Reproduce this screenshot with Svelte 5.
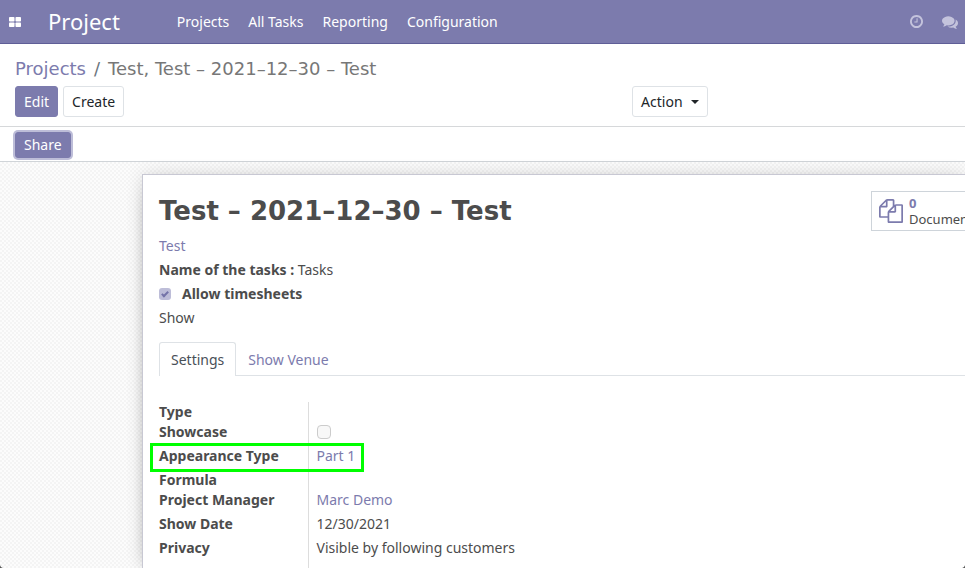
<script>
  const menu = ['Projects', 'All Tasks', 'Reporting', 'Configuration'];
  const fields = [
    { label: 'Type', compact: true },
    { label: 'Showcase', kind: 'check' },
    { label: 'Appearance Type', kind: 'link', value: 'Part 1', highlight: true },
    { label: 'Formula', compact: true },
    { label: 'Project Manager', kind: 'link', value: 'Marc Demo' },
    { label: 'Show Date', value: '12/30/2021' },
    { label: 'Privacy', value: 'Visible by following customers' }
  ];
</script>

<div class="app">
  <header class="navbar">
    <button class="icon apps" aria-label="Applications">
      <svg viewBox="0 0 12 10" width="12" height="10">
        <rect width="5.5" height="4.5" rx="0.8" /><rect x="6.5" width="5.5" height="4.5" rx="0.8" />
        <rect y="5.5" width="5.5" height="4.5" rx="0.8" /><rect x="6.5" y="5.5" width="5.5" height="4.5" rx="0.8" />
      </svg>
    </button>
    <a class="brand" href="#project">Project</a>
    <nav>
      {#each menu as item}
        <a href="#menu">{item}</a>
      {/each}
    </nav>
    <div class="systray">
      <button class="icon" aria-label="Activities">
        <svg viewBox="0 128 1536 1536" width="13" height="13"><path d="M896 544v448q0 14-9 23t-23 9h-320q-14 0-23-9t-9-23v-64q0-14 9-23t23-9h224v-352q0-14 9-23t23-9h64q14 0 23 9t9 23zm416 352q0-148-73-273t-198-198-273-73-273 73-198 198-73 273 73 273 198 198 273 73 273-73 198-198 73-273zm224 0q0 209-103 385.5t-279.5 279.5-385.5 103-385.5-103-279.5-279.5-103-385.5 103-385.5 279.5-279.5 385.5-103 385.5 103 279.5 279.5 103 385.5z" /></svg>
      </button>
      <button class="icon" aria-label="Conversations">
        <svg viewBox="0 0 1792 1792" width="16" height="16"><path d="M1408 768q0 139-94 257t-256.5 186.5-353.5 68.5q-86 0-176-16-124 88-278 128-36 9-86 16h-3q-11 0-20.500-8t-11.500-21q-1-3-1-6.500t.5-6.500 2-6l2.500-5 3.500-5.500 4-5 4.500-5 4-4.500q5-6 23-25t26-29.500 22.500-29 25-38.500 20.500-44q-124-72-195-177t-71-224q0-139 94-257t256.500-186.500 353.500-68.500 353.500 68.500 256.500 186.500 94 257zm384 256q0 120-71 224.500t-195 176.500q10 24 20.500 44t25 38.500 22.500 29 26 29.500 23 25q1 1 4 4.500t4.500 5 4 5 3.500 5.500l2.500 5 2 6 .5 6.500-1 6.500q-3 14-13 22t-22 7q-50-7-86-16-154-40-278-128-90 16-176 16-271 0-472-132 58 4 88 4 161 0 309-45t264-129q125-92 192-212t67-254q0-77-23-152 129 71 204 178t75 230z" /></svg>
      </button>
    </div>
  </header>

  <section class="control-panel">
    <div class="breadcrumb">
      <a href="#projects">Projects</a><span class="slash">/</span><span>Test, Test – 2021–12–30 – Test</span>
    </div>
    <div class="actions">
      <div class="left">
        <button class="btn primary">Edit</button>
        <button class="btn">Create</button>
      </div>
      <button class="btn">Action <span class="caret"></span></button>
    </div>
  </section>

  <div class="statusbar">
    <button class="btn primary share">Share</button>
  </div>

  <main>
    <article class="sheet">
      <div class="heading">
        <h1>Test – 2021–12–30 – Test</h1>
        <button class="stat">
          <svg viewBox="0 0 1792 1792" width="24" height="24"><path d="M1696 384q40 0 68 28t28 68v1216q0 40-28 68t-68 28h-960q-40 0-68-28t-28-68v-288h-544q-40 0-68-28t-28-68v-672q0-40 20-88t48-76l408-408q28-28 76-48t88-20h416q40 0 68 28t28 68v328q68-40 128-40h416zm-544 213l-299 299h299v-299zm-640-384l-299 299h299v-299zm196 647l316-316v-416h-384v416q0 40-28 68t-68 28h-416v640h512v-256q0-40 20-88t48-76zm956 804v-1152h-384v416q0 40-28 68t-68 28h-416v640h896z" /></svg>
          <span class="stat-text"><b>0</b><span>Documents</span></span>
        </button>
      </div>
      <div class="info">
        <div><a href="#test">Test</a></div>
        <div><b>Name of the tasks :</b> Tasks</div>
        <div class="check-row">
          <input id="timesheets" type="checkbox" checked disabled />
          <label for="timesheets">Allow timesheets</label>
        </div>
        <div>Show</div>
      </div>
      <div class="tabs" role="tablist">
        <button role="tab" class="active" aria-selected="true">Settings</button>
        <button role="tab" aria-selected="false">Show Venue</button>
      </div>
      <table>
        <tbody>
          {#each fields as f}
            <tr class:compact={f.compact} class:highlight={f.highlight}>
              <th scope="row">
                {#if f.kind === 'check'}<label for="showcase">{f.label}</label>{:else}{f.label}{/if}
              </th>
              <td>
                {#if f.kind === 'check'}
                  <input id="showcase" type="checkbox" disabled />
                {:else if f.kind === 'link'}
                  <a href="#record">{f.value}</a>
                {:else}
                  {f.value ?? ''}
                {/if}
              </td>
            </tr>
          {/each}
        </tbody>
      </table>
    </article>
  </main>
</div>

<style>
  :global(body) { margin: 0; }
  .app {
    display: flex;
    flex-direction: column;
    height: 100vh;
    overflow: hidden;
    font: 14px/20px "Lucida Grande", "Noto Sans", sans-serif;
    color: #4c4c4c;
    background: #fff;
  }
  .app * { box-sizing: border-box; }
  .app::before, .app::after {
    content: "";
    position: fixed;
    z-index: 5;
    bottom: 0;
    width: 5px;
    height: 5px;
  }
  .app::before { left: 0; background: radial-gradient(circle at 100% 0, transparent 5px, #555 6px); }
  .app::after { right: 0; background: radial-gradient(circle at 0 0, transparent 5px, #555 6px); }
  a { color: #7c7bad; text-decoration: none; }
  button { font: inherit; color: inherit; margin: 0; cursor: pointer; }
  svg { display: block; fill: currentColor; flex: none; }

  .navbar {
    display: flex;
    align-items: center;
    flex: none;
    height: 44px;
    padding: 0 7px 0 9px;
    background: #7c7bad;
    border-bottom: 1px solid #5f5e97;
    color: #fff;
  }
  .icon { padding: 0; border: 0; background: none; }
  .navbar a { color: #fff; }
  .brand { margin: 0 57px 0 27px; padding-bottom: 2px; font-size: 22px; line-height: 28px; }
  nav { display: flex; gap: 19px; }
  .systray { display: flex; align-items: center; gap: 19px; margin-left: auto; color: #c4c3dc; }

  .control-panel {
    flex: none;
    padding: 11px 15px 9px;
    border-bottom: 1px solid #d6d8da;
  }
  .breadcrumb {
    font: 18px/28px "Lucida Grande", "DejaVu Sans", sans-serif;
    color: #777;
    white-space: nowrap;
  }
  .slash { padding: 0 8px; color: #6c757d; }
  .actions { display: flex; padding-top: 3px; }
  .left { display: flex; gap: 5px; width: 66%; }
  .btn {
    display: flex;
    align-items: center;
    height: 31px;
    padding: 0 8px;
    border: 1px solid #dee2e6;
    border-radius: 3px;
    background: #fff;
    color: #212529;
  }
  .primary { background: #7c7bad; border-color: #7c7bad; color: #fff; }
  .caret { margin-left: 8px; border: 4px solid transparent; border-top-color: #212529; border-bottom: 0; }

  .statusbar {
    flex: none;
    padding: 5px 15px 3px;
    border-bottom: 1px solid #d0d4d8;
  }
  .share { height: 26px; box-shadow: 0 0 0 2px #bdbdd8; }

  main {
    flex: 1;
    min-height: 0;
    display: flex;
    padding: 12px 0 0 142px;
    background: repeating-conic-gradient(#f4f4f4 0 25%, #fcfcfc 0 50%) 0 0 / 4px 4px;
  }
  .sheet {
    flex: 1;
    min-width: 0;
    padding: 16px 0 0 16px;
    background: #fff;
    border: 1px solid #c8c8d3;
    border-width: 1px 0 0 1px;
    box-shadow: 0 5px 20px -15px #000, 0 0 16px rgba(0, 0, 0, 0.12);
    overflow: hidden;
  }
  .heading { display: flex; justify-content: space-between; height: 42px; }
  h1 {
    margin: 0;
    font: 700 26px/40px "Lucida Grande", "DejaVu Sans", sans-serif;
    white-space: nowrap;
  }
  .stat {
    display: flex;
    align-items: center;
    gap: 6px;
    width: 94px;
    height: 40px;
    padding: 0 0 0 7px;
    border: 1px solid #ced4da;
    border-right: 0;
    background: #fff;
    text-align: left;
    overflow: hidden;
    color: #7c7bad;
  }
  .stat-text { display: flex; flex-direction: column; font-size: 13px; line-height: 16px; }
  .stat-text span { color: #4c4c4c; }
  .info { display: flex; flex-direction: column; gap: 4px; padding-top: 3px; }
  .check-row { display: flex; align-items: center; gap: 11px; }
  .check-row label { font-weight: 700; }
  input {
    appearance: none;
    display: block;
    width: 14px;
    height: 14px;
    margin: 0;
    border: 1px solid #ccc;
    border-radius: 4px;
    background: #f8f8f8;
  }
  input:checked {
    width: 12px;
    height: 12px;
    border: 0;
    border-radius: 3px;
    background: #bdbdd8;
  }
  input:checked::before {
    content: "";
    display: block;
    box-sizing: border-box;
    width: 4px;
    height: 7px;
    margin: 2px auto 0;
    border: solid #7473a8;
    border-width: 0 2px 2px 0;
    transform: rotate(45deg);
  }
  .tabs { display: flex; margin-top: 14px; border-bottom: 1px solid #dee2e6; }
  .tabs button {
    height: 34px;
    margin-bottom: -1px;
    padding: 0 11px;
    border: 1px solid transparent;
    border-bottom: 0;
    border-radius: 3px 3px 0 0;
    background: none;
    color: #7c7bad;
  }
  .tabs .active { background: #fff; border-color: #dee2e6; color: #495057; }
  table { margin-top: 26px; border-collapse: collapse; }
  tr { height: 24px; position: relative; }
  .compact { height: 20px; }
  th, td { padding: 0; vertical-align: top; text-align: left; }
  th { width: 149px; font-weight: 700; border-right: 1px solid #ddd; }
  td { padding-left: 8px; }
  td input { margin-top: 3px; }
  tr:last-child { height: 40px; }
  .highlight::after {
    content: "";
    position: absolute;
    box-sizing: border-box;
    top: -3px;
    bottom: -2px;
    left: -9px;
    width: 214px;
    border: 3px solid #0f0;
  }
</style>
